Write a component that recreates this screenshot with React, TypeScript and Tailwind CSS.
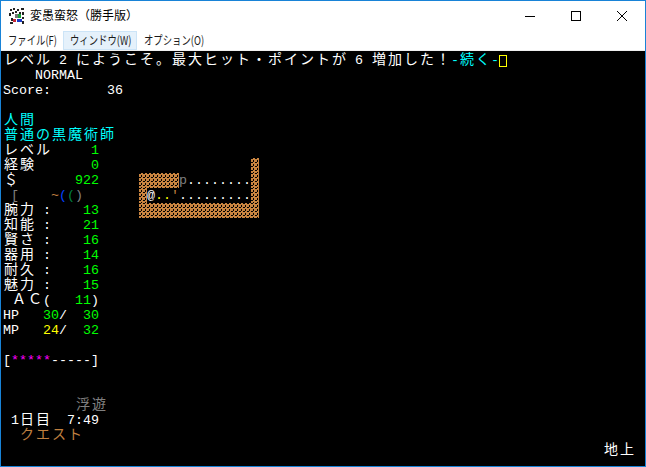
import { ReactNode } from "react";

const WHITE = "text-white";
const GREEN = "text-[#00ff00]";
const CYAN = "text-[#00ffff]";
const YELLOW = "text-[#ffff00]";
const MAGENTA = "text-[#ff00ff]";
const GRAY = "text-[#808080]";
const ORANGE = "text-[#c08040]";

// one terminal run: ascii takes one 8px cell, everything else takes two
const T = ({ c = WHITE, children }: { c?: string; children: string }) => (
  <>
    {Array.from(children).map((ch, i) =>
      ch.charCodeAt(0) < 128 ? (
        <span key={i} className={`w-[8px] shrink-0 text-center text-[13.33px] whitespace-pre ${c}`}>
          {ch}
        </span>
      ) : (
        <span key={i} className={`w-[16px] shrink-0 text-center text-[14px] whitespace-pre ${c}`}>
          {ch}
        </span>
      ),
    )}
  </>
);

// the dithered granite tile of the dungeon walls
const Wall = ({ n = 1 }: { n?: number }) => (
  <svg width={n * 8} height="15" className="shrink-0" shapeRendering="crispEdges">
    <defs>
      <pattern id="wall" width="4" height="4" patternUnits="userSpaceOnUse">
        <rect width="4" height="4" fill="#c88440" />
        <path d="M0 0h2v1H0zM2 2h1v2H2z" fill="#000" />
      </pattern>
    </defs>
    <rect width={n * 8} height="15" fill="url(#wall)" />
  </svg>
);

const Row = ({ children }: { children?: ReactNode }) => (
  <div className="flex h-[15px] leading-[15px]">{children}</div>
);

const Stat = ({ label, value }: { label: string; value: string }) => (
  <>
    <T>{label + " :"}</T>
    <T c={GREEN}>{"    " + value}</T>
  </>
);

const GameIcon = () => (
  <svg width="16" height="16" viewBox="0 0 16 16" shapeRendering="crispEdges">
    <rect x="0" y="0" width="16" height="16" fill="#fff" />
    <path d="M1 1h2v2H1zM4 0h2v2H4zM8 1h2v2H8zM12 0h3v2h-3zM0 5h2v3H0zM13 4h2v3h-2zM2 10h2v3H2zM13 9h2v2h-2zM6 3h2v2H6zM3 4h2v2H3zM10 4h2v2h-2zM1 14h3v2H1zM13 13h2v3h-2z" fill="#222" />
    <path d="M6 6h3v4H6z" fill="#777" />
    <path d="M9 6h3v4H9z" fill="#18a038" />
    <path d="M8 11h5v3H8z" fill="#1838c8" />
    <path d="M4 11h3v3H4z" fill="#c82838" />
  </svg>
);

const MenuItem = ({ label, width, active }: { label: string; width: string; active?: boolean }) => (
  <div
    className={`flex h-[19px] items-center border pl-[6px] text-[12px] text-[#1a1a1a] ${width} ${
      active ? "border-[#cce4f7] bg-[#e5f1fb]" : "border-transparent"
    }`}
  >
    <span className="origin-left scale-x-[.78] whitespace-nowrap">{label}</span>
  </div>
);

const WinButton = ({ children }: { children: ReactNode }) => (
  <div className="flex h-[30px] w-[46px] items-center justify-center">{children}</div>
);

export default function App() {
  return (
    <div className="flex h-[467px] w-[646px] flex-col overflow-hidden border border-[#1883d7] bg-white font-['Liberation_Mono','Noto_Sans_CJK_JP',monospace]">
      <div className="flex h-[29px] shrink-0 items-center font-['Noto_Sans_CJK_JP',sans-serif]">
        <div className="ml-[8px] mr-[5px]">
          <GameIcon />
        </div>
        <span className="mb-[2px] text-[12px] text-black">変愚蛮怒（勝手版）</span>
        <div className="ml-auto flex">
          <WinButton>
            <svg width="10" height="10" viewBox="0 0 10 10" shapeRendering="crispEdges">
              <path d="M0 5h10" stroke="#000" fill="none" />
            </svg>
          </WinButton>
          <WinButton>
            <svg width="10" height="10" viewBox="0 0 10 10" shapeRendering="crispEdges">
              <path d="M.5.5h9v9h-9z" stroke="#000" fill="none" />
            </svg>
          </WinButton>
          <WinButton>
            <svg width="10" height="10" viewBox="0 0 10 10">
              <path d="M0 0l10 10M10 0L0 10" stroke="#000" fill="none" />
            </svg>
          </WinButton>
        </div>
      </div>

      <div className="flex h-[21px] shrink-0 items-center border-b border-[#f0f0f0] font-['Noto_Sans_CJK_JP',sans-serif]">
        <MenuItem label="ファイル(F)" width="w-[62px]" />
        <MenuItem label="ウィンドウ(W)" width="w-[74px]" active />
        <MenuItem label="オプション(O)" width="w-[74px]" />
      </div>

      <div className="flex-1 bg-black pl-[2px] pt-[2px]">
        <Row>
          <T>レベル 2 にようこそ。最大ヒット・ポイントが 6 増加した！</T>
          <T c={CYAN}>-続く-</T>
          <span className="mt-[2px] h-[12px] w-[8px] shrink-0 border border-[#ffff00]" />
        </Row>
        <Row>
          <T>{"    NORMAL"}</T>
        </Row>
        <Row>
          <T>{"Score:       36"}</T>
        </Row>
        <Row />
        <Row>
          <T c={CYAN}>人間</T>
        </Row>
        <Row>
          <T c={CYAN}>普通の黒魔術師</T>
        </Row>
        <Row>
          <T>レベル</T>
          <T c={GREEN}>{"     1"}</T>
        </Row>
        <Row>
          <T>経験</T>
          <T c={GREEN}>{"       0"}</T>
          <T>{"                   "}</T>
          <Wall />
        </Row>
        <Row>
          <T>＄</T>
          <T c={GREEN}>{"       922"}</T>
          <T>{"     "}</T>
          <Wall n={5} />
          <T c={GRAY}>p</T>
          <T>{"........"}</T>
          <Wall />
        </Row>
        <Row>
          <T c={GRAY}>{" ["}</T>
          <T>{"    "}</T>
          <T c={ORANGE}>~</T>
          <T c="text-[#0040ff]">(</T>
          <T c="text-[#008040]">(</T>
          <T c={GRAY}>)</T>
          <T>{"       "}</T>
          <Wall />
          <T>@</T>
          <T c={YELLOW}>..</T>
          <T c={ORANGE}>'</T>
          <T>{"........."}</T>
          <Wall />
        </Row>
        <Row>
          <Stat label="腕力" value="13" />
          <T>{"     "}</T>
          <Wall n={15} />
        </Row>
        <Row>
          <Stat label="知能" value="21" />
        </Row>
        <Row>
          <Stat label="賢さ" value="16" />
        </Row>
        <Row>
          <Stat label="器用" value="14" />
        </Row>
        <Row>
          <Stat label="耐久" value="16" />
        </Row>
        <Row>
          <Stat label="魅力" value="15" />
        </Row>
        <Row>
          <T>{" ＡＣ(   "}</T>
          <T c={GREEN}>11</T>
          <T>)</T>
        </Row>
        <Row>
          <T>{"HP   "}</T>
          <T c={GREEN}>30</T>
          <T>{"/  "}</T>
          <T c={GREEN}>30</T>
        </Row>
        <Row>
          <T>{"MP   "}</T>
          <T c={YELLOW}>24</T>
          <T>{"/  "}</T>
          <T c={GREEN}>32</T>
        </Row>
        <Row />
        <Row>
          <T>[</T>
          <T c={MAGENTA}>*****</T>
          <T>-----]</T>
        </Row>
        <Row />
        <Row />
        <Row>
          <T c={GRAY}>{"         浮遊"}</T>
        </Row>
        <Row>
          <T>{" 1日目  7:49"}</T>
        </Row>
        <Row>
          <T c={ORANGE}>{"  クエスト"}</T>
        </Row>
        <Row>
          <T>{" ".repeat(75) + "地上"}</T>
        </Row>
      </div>
    </div>
  );
}
